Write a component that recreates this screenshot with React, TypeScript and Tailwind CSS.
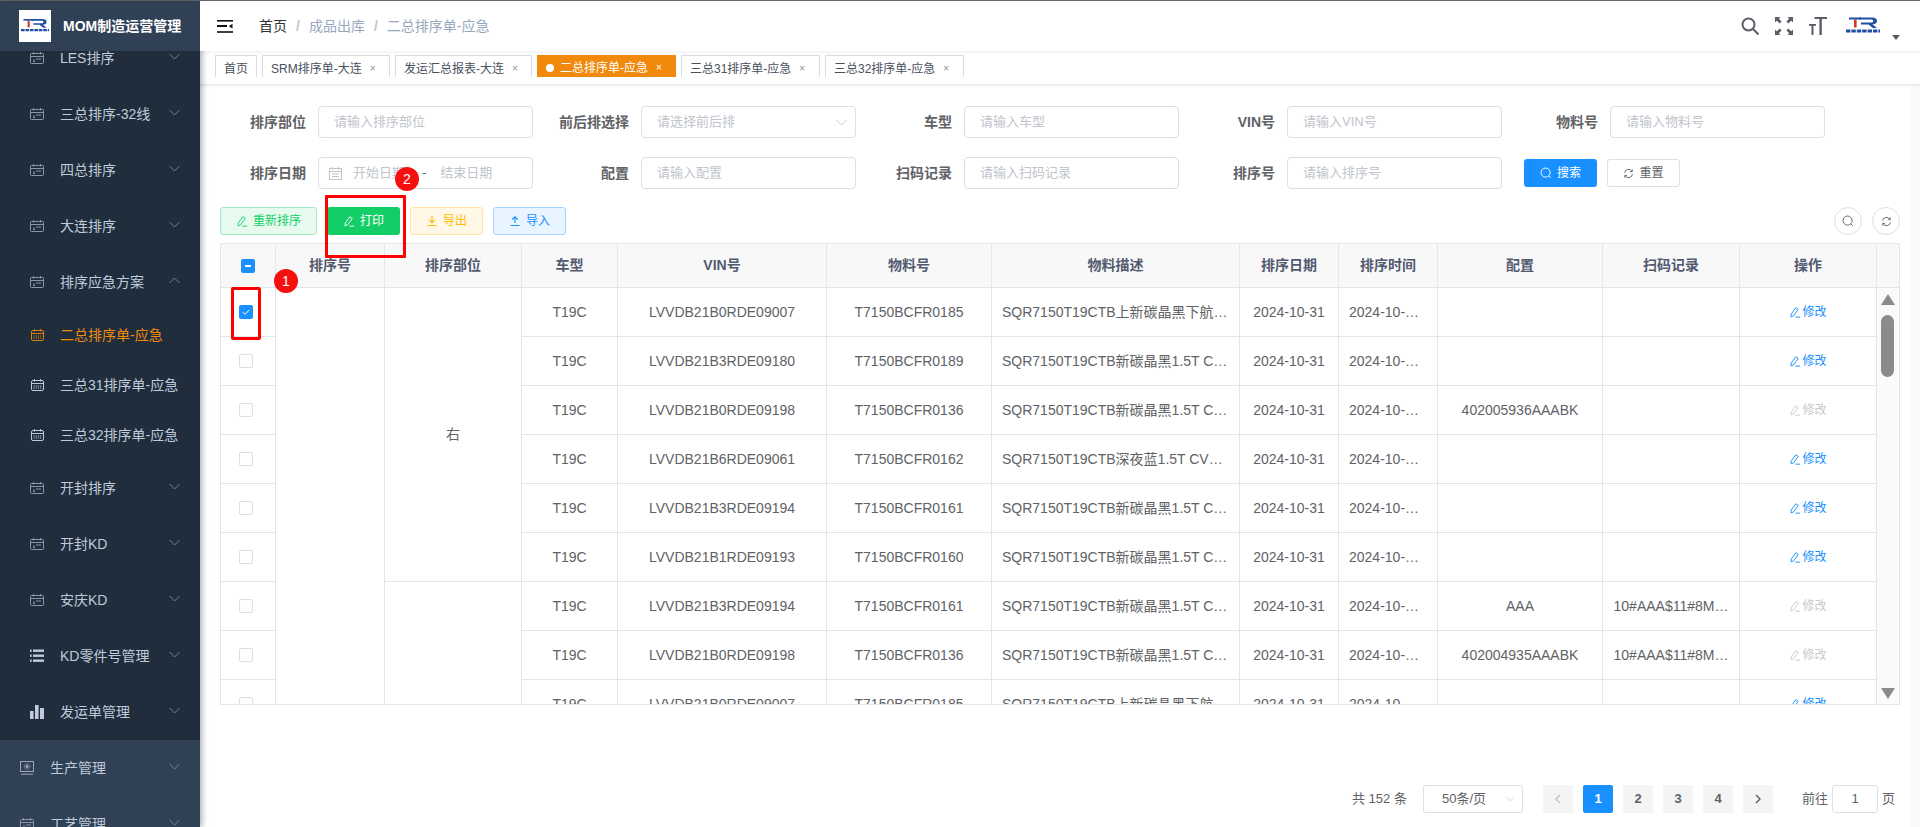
import React from "react";

const FONT = "font-['Liberation_Sans','Noto_Sans_CJK_SC',sans-serif]";

function Pencil({ className = "w-3 h-3" }: { className?: string }) {
  return (
    <svg viewBox="0 0 14 14" fill="none" stroke="currentColor" strokeWidth="1.1" className={className}>
      <path d="M2.5 9.5 L8 2 L10.8 4 L5.3 11.5 L2.4 12.7 Z" />
      <path d="M7.5 13h5.5" />
    </svg>
  );
}
function SearchO({ className = "w-3 h-3" }: { className?: string }) {
  return (
    <svg viewBox="0 0 14 14" fill="none" stroke="currentColor" strokeWidth="1.1" className={className}>
      <circle cx="6.5" cy="6.5" r="5.3" />
      <path d="M10.5 10.5 L12.6 12.6" />
    </svg>
  );
}
function RefreshO({ className = "w-[11px] h-[11px]" }: { className?: string }) {
  return (
    <svg viewBox="0 0 14 14" fill="none" stroke="currentColor" strokeWidth="1.2" className={className}>
      <path d="M2 6 A5 5 0 0 1 11.3 4.3" />
      <path d="M12 8 A5 5 0 0 1 2.7 9.7" />
      <path d="M11.8 1.8 V4.6 H9" />
      <path d="M2.2 12.2 V9.4 H5" />
    </svg>
  );
}
function Chevron({ up = false, className = "w-[11px] h-[7px]" }: { up?: boolean; className?: string }) {
  return (
    <svg viewBox="0 0 11 7" fill="none" stroke="currentColor" strokeWidth="0.9" className={className}>
      <path d={up ? "M0.5 6 L5.5 1 L10.5 6" : "M0.5 1 L5.5 6 L10.5 1"} />
    </svg>
  );
}
function CalClosed() {
  return (
    <svg viewBox="0 0 14 12" fill="none" stroke="currentColor" strokeWidth="1" className="w-[14px] h-[12px] text-[#8a95a3]">
      <rect x="0.5" y="1.5" width="13" height="10" rx="1" />
      <path d="M3.5 0v2.5M10.5 0v2.5M1 4.5h12" />
      <path d="M3 8h2M6 7h5M3 9.5h2" strokeWidth="1" />
    </svg>
  );
}
function CalSub({ active = false }: { active?: boolean }) {
  return (
    <svg viewBox="0 0 13 12" fill="none" stroke="currentColor" strokeWidth="1" className={`w-[13px] h-[12px] ${active ? "text-[#d9800f]" : "text-[#bfcbd9]"}`}>
      <rect x="0.5" y="1.5" width="12" height="10" rx="1.5" />
      <path d="M3.5 0v2.5M9.5 0v2.5M1 4.5h11" />
      <path d="M2.5 7h8M2.5 9h8" strokeDasharray="1.2 1" />
    </svg>
  );
}
function ListIcon() {
  return (
    <svg viewBox="0 0 14 14" fill="#bfcbd9" className="w-[14px] h-[14px]">
      <rect x="0" y="0.5" width="1.6" height="2.4" />
      <rect x="3" y="0.5" width="11" height="2.4" />
      <rect x="0" y="5.5" width="1.6" height="2.4" />
      <rect x="3" y="5.5" width="11" height="2.4" />
      <rect x="0" y="10.5" width="1.6" height="2.4" />
      <rect x="3" y="10.5" width="11" height="2.4" />
    </svg>
  );
}
function BarsIcon() {
  return (
    <svg viewBox="0 0 14 14" fill="#bfcbd9" className="w-[14px] h-[14px]">
      <rect x="0" y="6" width="3.6" height="8" />
      <rect x="5" y="0" width="3.6" height="14" />
      <rect x="10" y="3" width="4" height="11" />
    </svg>
  );
}
function MonitorIcon() {
  return (
    <svg viewBox="0 0 14 14" fill="none" stroke="#9aa7b6" strokeWidth="1" className="w-[14px] h-[14px]">
      <rect x="0.5" y="0.5" width="13" height="10" />
      <circle cx="7" cy="5.5" r="2.8" strokeDasharray="1 0.6" />
      <circle cx="7" cy="5.5" r="1.2" fill="#9aa7b6" />
      <path d="M1 13.2h12" />
    </svg>
  );
}
function TRLogo({ className }: { className?: string }) {
  return (
    <svg viewBox="0 0 34 18" className={className}>
      <rect x="3" y="0.5" width="12" height="2" fill="#1e4fa3" />
      <rect x="8" y="2.5" width="2.6" height="8" fill="#d9342b" />
      <path d="M13 0.5 H26 Q31 0.5 31 4 Q31 7 26.5 7.4 L31 11 H27 L22.5 7.5 H15 V5.6 H25.5 Q27.3 5.6 27.3 4 Q27.3 2.5 25.5 2.5 H13 Z" fill="#1e4fa3" />
      <path d="M0 14h34" stroke="#1e4fa3" strokeWidth="3" strokeDasharray="4.4 1" />
    </svg>
  );
}

function NavItem({ label, icon, open = false, top = false }: { label: string; icon: React.ReactNode; open?: boolean; top?: boolean }) {
  return (
    <div className={`relative h-[56px] flex items-center text-[14px] text-[#bfcbd9] ${top ? "pl-[20px] bg-[#304156]" : "pl-[30px]"}`}>
      <span className="flex justify-center w-[14px] mr-[16px]">{icon}</span>
      <span>{label}</span>
      <span className="absolute right-[20px] top-[23px] text-[#7f8b99]"><Chevron up={open} /></span>
    </div>
  );
}
function SubItem({ label, active = false }: { label: string; active?: boolean }) {
  return (
    <div className={`h-[50px] flex items-center pl-[31px] text-[14px] ${active ? "text-[#f18a0c]" : "text-[#bfcbd9]"}`}>
      <span className="w-[13px] mr-[16px] flex"><CalSub active={active} /></span>
      <span>{label}</span>
    </div>
  );
}

function Sidebar() {
  return (
    <aside className="relative w-[200px] shrink-0 h-full bg-[#1f2d3d] overflow-hidden">
      <div className="relative z-10 h-[50px] bg-[#304156] flex items-center pl-[19px]">
        <div className="w-[32px] h-[32px] bg-white flex items-center justify-center">
          <TRLogo className="w-[28px] h-[16px]" />
        </div>
        <span className="ml-[12px] text-white font-bold text-[14px] whitespace-nowrap">MOM制造运营管理</span>
      </div>
      <div className="mt-[-21px]">
        <NavItem label="LES排序" icon={<CalClosed />} />
        <NavItem label="三总排序-32线" icon={<CalClosed />} />
        <NavItem label="四总排序" icon={<CalClosed />} />
        <NavItem label="大连排序" icon={<CalClosed />} />
        <NavItem label="排序应急方案" icon={<CalClosed />} open />
        <SubItem label="二总排序单-应急" active />
        <SubItem label="三总31排序单-应急" />
        <SubItem label="三总32排序单-应急" />
        <NavItem label="开封排序" icon={<CalClosed />} />
        <NavItem label="开封KD" icon={<CalClosed />} />
        <NavItem label="安庆KD" icon={<CalClosed />} />
        <NavItem label="KD零件号管理" icon={<ListIcon />} />
        <NavItem label="发运单管理" icon={<BarsIcon />} />
        <NavItem label="生产管理" icon={<MonitorIcon />} top />
        <NavItem label="工艺管理" icon={<CalClosed />} top />
      </div>
    </aside>
  );
}

function HeaderBar() {
  return (
    <header className="relative z-20 h-[50px] bg-white flex items-center shadow-[0_1px_4px_rgba(0,21,41,0.08)]">
      <svg viewBox="0 0 16 13" className="ml-[17px] w-[16px] h-[13px]" fill="#111">
        <rect x="0" y="0" width="16" height="1.6" />
        <rect x="0" y="5" width="10" height="2" />
        <rect x="0" y="11.2" width="16" height="1.6" />
        <path d="M15.5 3.8 V8.6 L11.8 6.2 Z" />
      </svg>
      <nav className="ml-[26px] text-[14px] flex items-center">
        <span className="text-[#303133]">首页</span>
        <span className="mx-[9px] text-[#c0c4cc] font-bold">/</span>
        <span className="text-[#97a8be]">成品出库</span>
        <span className="mx-[9px] text-[#c0c4cc] font-bold">/</span>
        <span className="text-[#97a8be]">二总排序单-应急</span>
      </nav>
      <div className="ml-auto flex items-start mr-[20px] mt-[5px]">
        <svg viewBox="0 0 18 18" fill="none" stroke="#5a5e66" strokeWidth="2" className="w-[18px] h-[18px]">
          <circle cx="7.5" cy="7.5" r="6" />
          <path d="M12 12 L17.5 17.5" />
        </svg>
        <svg viewBox="0 0 18 18" fill="#5a5e66" className="ml-[16px] w-[18px] h-[18px]">
          <path d="M0 0h5.5L3.8 1.8 6.6 4.6 4.6 6.6 1.8 3.8 0 5.5Z" />
          <path d="M18 0v5.5L16.2 3.8 13.4 6.6 11.4 4.6 14.2 1.8 12.5 0Z" />
          <path d="M0 18v-5.5L1.8 14.2 4.6 11.4 6.6 13.4 3.8 16.2 5.5 18Z" />
          <path d="M18 18h-5.5L14.2 16.2 11.4 13.4 13.4 11.4 16.2 14.2 18 12.5Z" />
        </svg>
        <svg viewBox="0 0 18 18" fill="#5a5e66" className="ml-[16px] w-[18px] h-[18px]">
          <rect x="5.5" y="0" width="12.5" height="2" />
          <rect x="10.4" y="0" width="2.4" height="18" />
          <rect x="0" y="7" width="7" height="1.8" />
          <rect x="2.5" y="7" width="2" height="11" />
        </svg>
        <TRLogo className="ml-[19px] w-[34px] h-[18px]" />
        <svg viewBox="0 0 8 5" fill="#5a5e66" className="ml-[12px] mt-[18px] w-[8px] h-[5px]">
          <path d="M0 0h8L4 5Z" />
        </svg>
      </div>
    </header>
  );
}

function Tag({ label, w, active = false, close = true }: { label: string; w: string; active?: boolean; close?: boolean }) {
  return (
    <div className={`h-[22px] overflow-hidden flex items-start text-[12px] leading-[26px] whitespace-nowrap pl-[8px] ${w} ${active ? "bg-[#f18a0c] text-white" : "bg-white border-t border-x border-[#d8dce5] text-[#495060]"}`}>
      {active && <span className="w-[8px] h-[8px] rounded-full bg-white mt-[9px] mr-[6px] ml-[1px] shrink-0" />}
      <span>{label}</span>
      {close && <span className={`ml-[8px] text-[10px] ${active ? "text-white" : "text-[#8a8f99]"}`}>×</span>}
    </div>
  );
}

function TagsBar() {
  return (
    <div className="relative z-10 h-[33px] bg-white pt-[4px] pl-[15px] flex items-start gap-[5px] shadow-[0_1px_3px_rgba(0,0,0,0.12),0_0_3px_rgba(0,0,0,0.04)]">
      <Tag label="首页" w="w-[42px]" close={false} />
      <Tag label="SRM排序单-大连" w="w-[128px]" />
      <Tag label="发运汇总报表-大连" w="w-[137px]" />
      <Tag label="二总排序单-应急" w="w-[139px]" active />
      <Tag label="三总31排序单-应急" w="w-[139px]" />
      <Tag label="三总32排序单-应急" w="w-[139px]" />
    </div>
  );
}

function Field({ label, placeholder, select = false }: { label: string; placeholder: string; select?: boolean }) {
  return (
    <div className="w-[323px] shrink-0 flex items-center">
      <label className="w-[96px] text-right text-[14px] font-bold text-[#606266] whitespace-nowrap">{label}</label>
      <div className="ml-[12px] w-[215px] h-[32px] border border-[#dcdfe6] rounded-[4px] flex items-center pl-[15px] pr-[8px] text-[13px] text-[#c0c4cc] bg-white">
        <span>{placeholder}</span>
        {select && <span className="ml-auto text-[#c0c4cc]"><Chevron /></span>}
      </div>
    </div>
  );
}

function FilterForm() {
  return (
    <div className="pl-[10px] pt-[22px]">
      <div className="flex">
        <Field label="排序部位" placeholder="请输入排序部位" />
        <Field label="前后排选择" placeholder="请选择前后排" select />
        <Field label="车型" placeholder="请输入车型" />
        <Field label="VIN号" placeholder="请输入VIN号" />
        <Field label="物料号" placeholder="请输入物料号" />
      </div>
      <div className="flex mt-[19px]">
        <div className="w-[323px] shrink-0 flex items-center">
          <label className="w-[96px] text-right text-[14px] font-bold text-[#606266]">排序日期</label>
          <div className="ml-[12px] w-[215px] h-[32px] border border-[#dcdfe6] rounded-[4px] flex items-center pl-[10px] text-[13px] text-[#c0c4cc]">
            <svg viewBox="0 0 13 13" fill="none" stroke="#c0c4cc" strokeWidth="1" className="w-[13px] h-[13px]">
              <rect x="0.5" y="1.5" width="12" height="11" />
              <path d="M3.5 0v3M9.5 0v3M1 4.5h11M3 7h7M3 9.5h7" />
            </svg>
            <span className="ml-[11px]">开始日期</span>
            <span className="ml-[17px] text-[#606266]">-</span>
            <span className="ml-[14px]">结束日期</span>
          </div>
        </div>
        <Field label="配置" placeholder="请输入配置" />
        <Field label="扫码记录" placeholder="请输入扫码记录" />
        <Field label="排序号" placeholder="请输入排序号" />
        <div className="flex items-center ml-[22px] gap-[10px]">
          <button className="w-[73px] h-[28px] rounded-[3px] bg-[#1890ff] text-white text-[12px] flex items-center justify-center gap-[5px]">
            <SearchO /> 搜索
          </button>
          <button className="w-[73px] h-[28px] rounded-[3px] border border-[#dcdfe6] bg-white text-[#606266] text-[12px] flex items-center justify-center gap-[5px]">
            <RefreshO /> 重置
          </button>
        </div>
      </div>
    </div>
  );
}

function Toolbar() {
  return (
    <div className="mt-[18px] pl-[20px] pr-[20px] flex items-center h-[28px] text-[12px]">
      <button className="w-[97px] h-[28px] rounded-[3px] border border-[#a1ebc2] bg-[#e7faf0] text-[#13ce66] flex items-center justify-center gap-[5px]">
        <Pencil /> 重新排序
      </button>
      <button className="ml-[10px] w-[73px] h-[28px] rounded-[3px] bg-[#13ce66] text-white flex items-center justify-center gap-[5px]">
        <Pencil /> 打印
      </button>
      <button className="ml-[10px] w-[73px] h-[28px] rounded-[3px] border border-[#ffe399] bg-[#fff8e6] text-[#ffba00] flex items-center justify-center gap-[5px]">
        <svg viewBox="0 0 12 12" fill="none" stroke="currentColor" strokeWidth="1.1" className="w-3 h-3"><path d="M6 1v6.5M3.2 5 6 7.8 8.8 5M1.5 10.5h9" /></svg> 导出
      </button>
      <button className="ml-[10px] w-[73px] h-[28px] rounded-[3px] border border-[#a3d3ff] bg-[#e8f4ff] text-[#1890ff] flex items-center justify-center gap-[5px]">
        <svg viewBox="0 0 12 12" fill="none" stroke="currentColor" strokeWidth="1.1" className="w-3 h-3"><path d="M6 8V2M3.2 4.5 6 1.7 8.8 4.5M1.5 10.5h9" /></svg> 导入
      </button>
      <button className="ml-auto w-[28px] h-[28px] rounded-full border border-[#dcdfe6] flex items-center justify-center text-[#606266]"><SearchO /></button>
      <button className="ml-[10px] w-[28px] h-[28px] rounded-full border border-[#dcdfe6] flex items-center justify-center text-[#606266]"><RefreshO /></button>
    </div>
  );
}

type Row = { vin: string; part: string; desc: string; config?: string; scan?: string; disabled?: boolean; checked?: boolean };
const D1 = "SQR7150T19CTB上新碳晶黑下航…";
const D2 = "SQR7150T19CTB新碳晶黑1.5T C…";
const D3 = "SQR7150T19CTB深夜蓝1.5T CV…";
const SCAN = "10#AAA$11#8M…";
const rows: Row[] = [
  { vin: "LVVDB21B0RDE09007", part: "T7150BCFR0185", desc: D1, checked: true },
  { vin: "LVVDB21B3RDE09180", part: "T7150BCFR0189", desc: D2 },
  { vin: "LVVDB21B0RDE09198", part: "T7150BCFR0136", desc: D2, config: "402005936AAABK", disabled: true },
  { vin: "LVVDB21B6RDE09061", part: "T7150BCFR0162", desc: D3 },
  { vin: "LVVDB21B3RDE09194", part: "T7150BCFR0161", desc: D2 },
  { vin: "LVVDB21B1RDE09193", part: "T7150BCFR0160", desc: D2 },
  { vin: "LVVDB21B3RDE09194", part: "T7150BCFR0161", desc: D2, config: "AAA", scan: SCAN, disabled: true },
  { vin: "LVVDB21B0RDE09198", part: "T7150BCFR0136", desc: D2, config: "402004935AAABK", scan: SCAN, disabled: true },
  { vin: "LVVDB21B0RDE09007", part: "T7150BCFR0185", desc: D1 },
];
const colWidths = [55, 109, 137, 96, 209, 165, 248, 99, 99, 165, 137, 137];
const heads = ["", "排序号", "排序部位", "车型", "VIN号", "物料号", "物料描述", "排序日期", "排序时间", "配置", "扫码记录", "操作"];

function Check({ checked = false, indeterminate = false, className = "" }: { checked?: boolean; indeterminate?: boolean; className?: string }) {
  const on = checked || indeterminate;
  return (
    <span className={`w-[14px] h-[14px] rounded-[2px] flex items-center justify-center ${on ? "bg-[#1890ff]" : "border border-[#dcdfe6] bg-white"} ${className}`}>
      {checked && (
        <svg viewBox="0 0 10 10" fill="none" stroke="#fff" strokeWidth="1" className="w-[10px] h-[10px]"><path d="M2 5.2 4.2 7.4 8.2 2.8" /></svg>
      )}
      {indeterminate && <span className="w-[6px] h-[2px] bg-white" />}
    </span>
  );
}

function DataTable() {
  const cell = "border-r border-b border-[#dfe6ec] h-[49px] p-0 text-center text-[14px] text-[#606266] whitespace-nowrap overflow-hidden";
  return (
    <div className="mt-[8px] ml-[20px] w-[1680px] h-[462px] border-l border-t border-b border-r border-[#dfe6ec] overflow-hidden flex">
      <table className="table-fixed border-separate border-spacing-0 w-[1656px] shrink-0 self-start">
        <colgroup>
          {colWidths.map((w, i) => (
            <col key={i} style={{ width: w }} />
          ))}
        </colgroup>
        <thead>
          <tr>
            {heads.map((h, i) => (
              <th key={i} className="border-r border-b border-[#dfe6ec] h-[44px] p-0 bg-[#f8f8f9] text-[14px] font-bold text-[#515a6e] text-center">
                {i === 0 ? <Check indeterminate className="ml-[20px]" /> : h}
              </th>
            ))}
          </tr>
        </thead>
        <tbody>
          {rows.map((r, i) => (
            <tr key={i}>
              <td className={cell}><Check checked={r.checked} className="ml-[18px]" /></td>
              {i === 0 && <td rowSpan={9} className={cell} />}
              {i === 0 && <td rowSpan={6} className={cell}>右</td>}
              {i === 6 && <td rowSpan={3} className={cell} />}
              <td className={cell}>T19C</td>
              <td className={cell}>{r.vin}</td>
              <td className={cell}>{r.part}</td>
              <td className={`${cell} text-left pl-[10px]`}>{r.desc}</td>
              <td className={cell}>2024-10-31</td>
              <td className={`${cell} text-left pl-[10px]`}>2024-10-…</td>
              <td className={cell}>{r.config}</td>
              <td className={cell}>{r.scan}</td>
              <td className={cell}>
                <span className={`h-[48px] flex items-center justify-center text-[12px] ${r.disabled ? "text-[#c8c9cc]" : "text-[#1890ff]"}`}>
                  <Pencil className="w-[12px] h-[12px] mr-[1px]" />修改
                </span>
              </td>
            </tr>
          ))}
        </tbody>
      </table>
      <div className="flex-1 flex flex-col bg-[#fafafa]">
        <div className="h-[44px] bg-[#f8f8f9] border-b border-[#dfe6ec] shrink-0" />
        <div className="flex-1 flex flex-col items-center pt-[6px] pb-[5px] pr-[1px]">
          <svg viewBox="0 0 14 11" fill="#8b8b8b" className="w-[14px] h-[11px]"><path d="M7 0 14 11H0Z" /></svg>
          <div className="mt-[10px] w-[13px] h-[62px] rounded-full bg-[#8b8b8b]" />
          <svg viewBox="0 0 14 11" fill="#8b8b8b" className="w-[14px] h-[11px] mt-auto"><path d="M0 0H14L7 11Z" /></svg>
        </div>
      </div>
    </div>
  );
}

function Pagination() {
  const box = "w-[30px] h-[28px] rounded-[2px] flex items-center justify-center font-bold text-[13px]";
  const idle = `${box} bg-[#f4f4f5] text-[#606266]`;
  return (
    <div className="mt-[80px] flex items-center h-[28px] text-[13px] text-[#606266] pl-[1152px]">
      <span className="w-[56px] whitespace-nowrap">共 152 条</span>
      <div className="ml-[15px] w-[100px] h-[28px] border border-[#dcdfe6] rounded-[3px] flex items-center pl-[18px] pr-[7px] whitespace-nowrap">
        <span>50条/页</span>
        <span className="ml-auto text-[#c0c4cc]"><Chevron className="w-[9px] h-[6px]" /></span>
      </div>
      <div className="ml-[20px] flex gap-[10px]">
        <span className={`${box} bg-[#f4f4f5] text-[#c0c4cc]`}>
          <svg viewBox="0 0 6 10" fill="none" stroke="currentColor" strokeWidth="1.5" className="w-[6px] h-[10px]"><path d="M5 1 1 5l4 4" /></svg>
        </span>
        <span className={`${box} bg-[#1890ff] text-white`}>1</span>
        <span className={idle}>2</span>
        <span className={idle}>3</span>
        <span className={idle}>4</span>
        <span className={idle}>
          <svg viewBox="0 0 6 10" fill="none" stroke="currentColor" strokeWidth="1.5" className="w-[6px] h-[10px]"><path d="M1 1l4 4-4 4" /></svg>
        </span>
      </div>
      <span className="ml-[29px]">前往</span>
      <div className="ml-[4px] w-[46px] h-[28px] border border-[#dcdfe6] rounded-[3px] flex items-center justify-center">1</div>
      <span className="ml-[4px]">页</span>
    </div>
  );
}

function Badge({ n, className }: { n: number; className: string }) {
  return (
    <span className={`absolute z-30 w-[24px] h-[24px] rounded-full bg-[#f60f0f] text-white text-[14px] flex items-center justify-center ${className}`}>{n}</span>
  );
}

export default function App() {
  return (
    <div className={`relative w-[1920px] h-[827px] overflow-hidden bg-white ${FONT}`}>
      <div className="h-[1px] bg-[#6b6b6b]" />
      <div className="flex h-[826px]">
        <div className="relative z-20 shadow-[2px_0_6px_rgba(0,21,41,0.35)] h-full">
          <Sidebar />
        </div>
        <main className="relative flex-1 min-w-0 h-full">
          <HeaderBar />
          <TagsBar />
          <FilterForm />
          <Toolbar />
          <DataTable />
          <Pagination />
          <div className="absolute right-0 top-[84px] bottom-0 w-[10px] bg-[#fafafa]" />
        </main>
      </div>
      <div className="absolute z-30 left-[231px] top-[287px] w-[30px] h-[53px] border-[3px] border-[#f00] rounded-[2px]" />
      <div className="absolute z-30 left-[325px] top-[195px] w-[81px] h-[63px] border-[3px] border-[#f00] rounded-[1px]" />
      <Badge n={1} className="left-[274px] top-[269px]" />
      <Badge n={2} className="left-[395px] top-[167px]" />
    </div>
  );
}
